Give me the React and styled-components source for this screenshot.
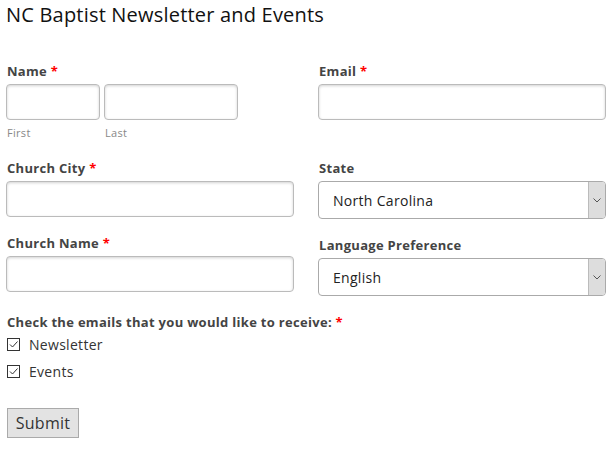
import styled, { createGlobalStyle } from "styled-components";

const GlobalStyle = createGlobalStyle`
  body {
    margin: 0;
    background: #fff;
    font-family: "Open Sans", "DejaVu Sans", sans-serif;
    color: #333;
  }
`;

function Required() {
  return <Star>*</Star>;
}

function Field({ label, required, children }) {
  return (
    <FieldWrap>
      <Label>
        {label} {required && <Required />}
      </Label>
      {children}
    </FieldWrap>
  );
}

function Select({ value }) {
  return (
    <SelectBox>
      <SelectValue>{value}</SelectValue>
      <SelectArrow>
        <svg width="8" height="5" viewBox="0 0 8 5">
          <path d="M0.5 0.5 L4 4 L7.5 0.5" fill="none" stroke="#555" strokeWidth="1" />
        </svg>
      </SelectArrow>
    </SelectBox>
  );
}

function Check({ label }) {
  return (
    <CheckRow>
      <CheckBox>
        <svg width="11" height="11" viewBox="0 0 11 11">
          <path d="M2 5.5 L4.5 8 L9.5 2.5" fill="none" stroke="#333" strokeWidth="1" />
        </svg>
      </CheckBox>
      <span>{label}</span>
    </CheckRow>
  );
}

function App() {
  return (
    <Page>
      <GlobalStyle />
      <Title>NC Baptist Newsletter and Events</Title>
      <Form>
        <TopRow>
          <Field label="Name" required>
            <NameGrid>
              <div>
                <Input $width="94px" />
                <SubLabel>First</SubLabel>
              </div>
              <div>
                <Input $width="134px" />
                <SubLabel>Last</SubLabel>
              </div>
            </NameGrid>
          </Field>
          <Field label="Email" required>
            <Input />
          </Field>
        </TopRow>
        <Columns>
          <Column>
            <Field label="Church City" required>
              <Input />
            </Field>
            <Field label="Church Name" required>
              <Input />
            </Field>
          </Column>
          <Column>
            <Field label="State">
              <Select value="North Carolina" />
            </Field>
            <Field label="Language Preference">
              <Select value="English" />
            </Field>
          </Column>
        </Columns>
        <Checks>
          <Label>
            Check the emails that you would like to receive: <Required />
          </Label>
          <Check label="Newsletter" />
          <Check label="Events" />
        </Checks>
        <SubmitButton type="button">Submit</SubmitButton>
      </Form>
    </Page>
  );
}

const Page = styled.div`
  padding: 0 6px;
`;

const Title = styled.h1`
  margin: 0;
  padding-top: 1px;
  font-size: 20px;
  font-weight: normal;
  line-height: 28px;
  letter-spacing: 0.2px;
  color: #111;
`;

const Form = styled.div`
  margin-top: 33px;
`;

const TopRow = styled.div`
  display: grid;
  grid-template-columns: 288px 288px;
  column-gap: 24px;
  align-items: start;
  margin-bottom: 17px;
`;

const Columns = styled.div`
  display: grid;
  grid-template-columns: 288px 288px;
  column-gap: 24px;
  align-items: start;
`;

const Column = styled.div`
  display: flex;
  flex-direction: column;
  gap: 17px;
`;

const FieldWrap = styled.div`
  display: flex;
  flex-direction: column;
  gap: 4px;
`;

const Label = styled.div`
  font-size: 13px;
  font-weight: bold;
  line-height: 18px;
  letter-spacing: 0.3px;
  color: #444;
  padding-left: 1px;
`;

const Star = styled.span`
  color: #f00;
`;

const NameGrid = styled.div`
  display: flex;
  gap: 4px;
`;

const Input = styled.div`
  box-sizing: border-box;
  width: ${(p) => p.$width || "100%"};
  height: 36px;
  border: 1px solid #bbb;
  border-radius: 4px;
  background: #fff;
  box-shadow: inset 0 1px 3px rgba(0, 0, 0, 0.18);
`;

const SubLabel = styled.div`
  padding-top: 4px;
  padding-left: 1px;
  font-size: 11px;
  line-height: 18px;
  letter-spacing: 0.3px;
  color: #888;
`;

const SelectBox = styled.div`
  box-sizing: border-box;
  display: flex;
  align-items: stretch;
  height: 38px;
  border: 1px solid #aaa;
  border-radius: 4px;
  overflow: hidden;
  background: #fff;
`;

const SelectValue = styled.div`
  flex: 1;
  display: flex;
  align-items: center;
  padding-left: 14px;
  font-size: 14px;
  letter-spacing: 0.3px;
  color: #222;
`;

const SelectArrow = styled.div`
  width: 16px;
  display: flex;
  align-items: center;
  justify-content: center;
  background: #ddd;
  border-left: 1px solid #bbb;
`;

const Checks = styled.div`
  margin-top: 17px;
  display: flex;
  flex-direction: column;
`;

const CheckRow = styled.div`
  display: flex;
  align-items: center;
  gap: 9px;
  height: 27px;
  padding-left: 1px;
  font-size: 14px;
  letter-spacing: 0.3px;
  color: #333;
`;

const CheckBox = styled.span`
  box-sizing: border-box;
  width: 13px;
  height: 13px;
  border: 1px solid #333;
  display: flex;
  align-items: center;
  justify-content: center;
  background: #fff;
`;

const SubmitButton = styled.button`
  margin-top: 23px;
  margin-left: 1px;
  width: 72px;
  height: 30px;
  padding: 0;
  border: 1px solid #aaa;
  background: #e3e3e3;
  font-family: "Open Sans", "DejaVu Sans", sans-serif;
  font-size: 16px;
  letter-spacing: 0.3px;
  color: #333;
`;

export default App;
